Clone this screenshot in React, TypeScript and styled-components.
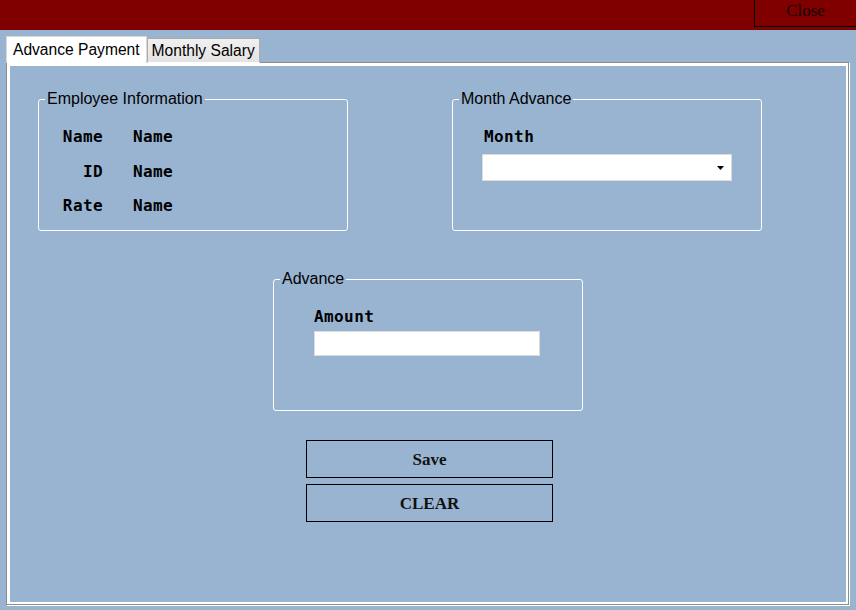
import React from "react";
import styled, { createGlobalStyle } from "styled-components";

const GlobalStyle = createGlobalStyle`
  html, body {
    margin: 0;
    padding: 0;
    background: #99b4d1;
  }
  body {
    width: 856px;
    height: 610px;
    overflow: hidden;
    font-family: "Liberation Sans", Arial, sans-serif;
  }
  * {
    box-sizing: border-box;
  }
`;

const Window = styled.div`
  display: flex;
  flex-direction: column;
  width: 856px;
  height: 610px;
  background: #99b4d1;
`;

const TitleBar = styled.div`
  display: flex;
  justify-content: flex-end;
  height: 30px;
  background: #800000;
`;

const CloseButton = styled.button`
  width: 102px;
  height: 27px;
  margin: 0;
  padding: 0 0 4px;
  background: transparent;
  border: none;
  border-left: 1px solid #000;
  border-bottom: 1px solid #000;
  font-family: "Liberation Serif", "Times New Roman", serif;
  font-size: 17px;
  color: #140000;
  cursor: pointer;
`;

const TabStrip = styled.div`
  display: flex;
  align-items: flex-end;
  height: 33px;
  padding-left: 6px;
  position: relative;
  z-index: 1;
  margin-bottom: -1px;
`;

const Tab = styled.div<{ $active?: boolean }>`
  display: flex;
  align-items: center;
  justify-content: center;
  height: ${(p) => (p.$active ? "27px" : "25px")};
  padding: ${(p) => (p.$active ? "0 6px 1px" : "0 4px")};
  background: ${(p) => (p.$active ? "#ffffff" : "linear-gradient(#f0f0f0, #e3e3e3)")};
  border: 1px solid ${(p) => (p.$active ? "#d9d9d9" : "#acacac")};
  border-bottom: ${(p) => (p.$active ? "none" : "1px solid #ffffff")};
  font-size: 15.6px;
  color: #000;
  white-space: nowrap;
`;

const Panel = styled.div`
  margin: 0 6px;
  height: 544px;
  border-top: 1px solid #8c8c8c;
  border-left: 1px solid #8c8c8c;
  border-right: 1px solid #ffffff;
  border-bottom: 1px solid #ffffff;
  box-shadow: inset -1px -1px 0 #8c8c8c, inset 0 0 0 3px #ffffff;
  padding: 27px 0 0 31px;
  display: flex;
  flex-direction: column;
`;

const TopRow = styled.div`
  display: flex;
  gap: 104px;
`;

const CenterRow = styled.div`
  display: flex;
  justify-content: center;
  margin-top: 39px;
  margin-left: -31px;
`;

const GroupBox = styled.fieldset`
  width: 310px;
  height: 141px;
  margin: 0;
  padding: 0;
  border: 1px solid #ffffff;
  border-radius: 3px;
  min-width: 0;
`;

const Legend = styled.legend`
  margin-left: 6px;
  padding: 0 2px;
  font-size: 16px;
  line-height: 18px;
  color: #000;
`;

const GroupBody = styled.div<{ $padLeft: number }>`
  padding-left: ${(p) => p.$padLeft}px;
`;

const InfoGrid = styled.div`
  display: grid;
  grid-template-columns: 50px auto;
  grid-auto-rows: 34.5px;
  column-gap: 30px;
  align-items: center;
  padding-top: 12px;
`;

const MonoLabel = styled.span<{ $right?: boolean }>`
  font-family: "DejaVu Sans Mono", "Liberation Mono", monospace;
  font-weight: bold;
  font-size: 16px;
  letter-spacing: 0.4px;
  line-height: 20px;
  color: #000;
  text-align: ${(p) => (p.$right ? "right" : "left")};
`;

const FieldLabel = styled(MonoLabel)<{ $indent: number }>`
  display: block;
  margin-top: 19px;
  padding-left: ${(p) => p.$indent}px;
`;

const SelectBox = styled.div`
  display: flex;
  align-items: center;
  justify-content: flex-end;
  width: 250px;
  height: 27px;
  margin-top: 7px;
  padding-right: 7px;
  background: #ffffff;
  border: 1px solid #dcdcdc;
`;

const TextInput = styled.input`
  display: block;
  width: 226px;
  height: 25px;
  margin-top: 4px;
  padding: 0 4px;
  background: #ffffff;
  border: 1px solid #dcdcdc;
  outline: none;
  font-family: "Liberation Sans", Arial, sans-serif;
  font-size: 14px;
`;

const ButtonColumn = styled.div`
  display: flex;
  flex-direction: column;
  align-items: center;
  gap: 6px;
  margin-top: 29px;
  margin-left: -28px;
`;

const ActionButton = styled.button`
  width: 247px;
  height: 38px;
  margin: 0;
  padding: 1px 0 0;
  background: transparent;
  border: 1px solid #000;
  font-family: "Liberation Serif", "Times New Roman", serif;
  font-weight: bold;
  font-size: 17px;
  color: #111;
  cursor: pointer;
`;

const infoRows = [
  { label: "Name", value: "Name" },
  { label: "ID", value: "Name" },
  { label: "Rate", value: "Name" },
];

const DropArrow = () => (
  <svg width="7" height="4" viewBox="0 0 7 4">
    <path d="M0 0 H7 L3.5 4 Z" fill="#000" />
  </svg>
);

export default function App() {
  return (
    <>
      <GlobalStyle />
      <Window>
        <TitleBar>
          <CloseButton>Close</CloseButton>
        </TitleBar>
        <TabStrip>
          <Tab $active>Advance Payment</Tab>
          <Tab>Monthly Salary</Tab>
        </TabStrip>
        <Panel>
          <TopRow>
            <GroupBox>
              <Legend>Employee Information</Legend>
              <GroupBody $padLeft={14}>
                <InfoGrid>
                  {infoRows.map((r) => (
                    <React.Fragment key={r.label}>
                      <MonoLabel $right>{r.label}</MonoLabel>
                      <MonoLabel>{r.value}</MonoLabel>
                    </React.Fragment>
                  ))}
                </InfoGrid>
              </GroupBody>
            </GroupBox>
            <GroupBox>
              <Legend>Month Advance</Legend>
              <GroupBody $padLeft={29}>
                <FieldLabel $indent={2}>Month</FieldLabel>
                <SelectBox role="combobox">
                  <DropArrow />
                </SelectBox>
              </GroupBody>
            </GroupBox>
          </TopRow>
          <CenterRow>
            <GroupBox>
              <Legend>Advance</Legend>
              <GroupBody $padLeft={40}>
                <FieldLabel $indent={0}>Amount</FieldLabel>
                <TextInput type="text" />
              </GroupBody>
            </GroupBox>
          </CenterRow>
          <ButtonColumn>
            <ActionButton>Save</ActionButton>
            <ActionButton>CLEAR</ActionButton>
          </ButtonColumn>
        </Panel>
      </Window>
    </>
  );
}
